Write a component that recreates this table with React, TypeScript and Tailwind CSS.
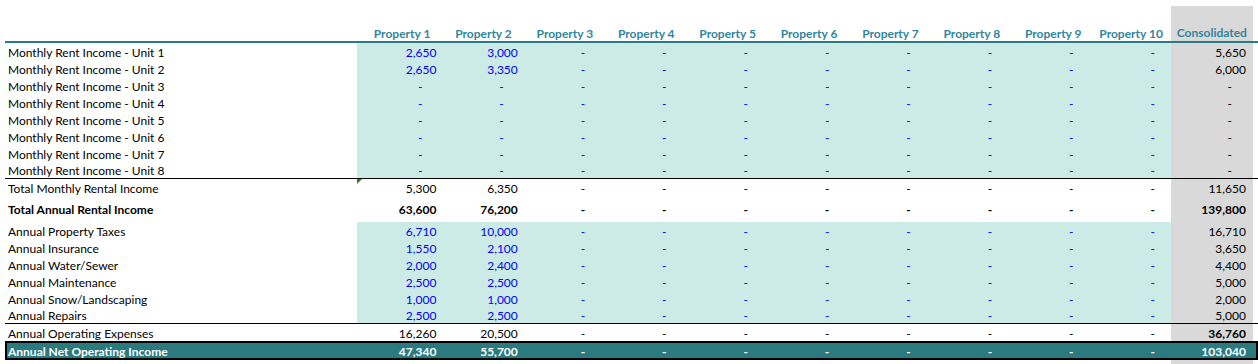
import React from 'react';

type Kind = 'input' | 'total' | 'annual' | 'opex' | 'noi';

interface RowDef {
  label: string;
  values: (number | null)[];
  cons: number | null;
  kind: Kind;
  lineBelow?: boolean;
  consBold?: boolean;
  flag?: boolean;
}

const fmt = (n: number) => n.toLocaleString('en-US');

const grid = 'grid grid-cols-[352px_repeat(10,81.4px)_82px]';

const pad = (vals: number[]) => [...vals, ...Array(10 - vals.length).fill(null)] as (number | null)[];

const rows: RowDef[] = [
  { label: 'Monthly Rent Income - Unit 1', values: pad([2650, 3000]), cons: 5650, kind: 'input' },
  { label: 'Monthly Rent Income - Unit 2', values: pad([2650, 3350]), cons: 6000, kind: 'input' },
  { label: 'Monthly Rent Income - Unit 3', values: pad([]), cons: null, kind: 'input' },
  { label: 'Monthly Rent Income - Unit 4', values: pad([]), cons: null, kind: 'input' },
  { label: 'Monthly Rent Income - Unit 5', values: pad([]), cons: null, kind: 'input' },
  { label: 'Monthly Rent Income - Unit 6', values: pad([]), cons: null, kind: 'input' },
  { label: 'Monthly Rent Income - Unit 7', values: pad([]), cons: null, kind: 'input' },
  { label: 'Monthly Rent Income - Unit 8', values: pad([]), cons: null, kind: 'input', lineBelow: true },
  { label: 'Total Monthly Rental Income', values: pad([5300, 6350]), cons: 11650, kind: 'total', flag: true },
  { label: 'Total Annual Rental Income', values: pad([63600, 76200]), cons: 139800, kind: 'annual' },
  { label: 'Annual Property Taxes', values: pad([6710, 10000]), cons: 16710, kind: 'input' },
  { label: 'Annual Insurance', values: pad([1550, 2100]), cons: 3650, kind: 'input' },
  { label: 'Annual Water/Sewer', values: pad([2000, 2400]), cons: 4400, kind: 'input' },
  { label: 'Annual Maintenance', values: pad([2500, 2500]), cons: 5000, kind: 'input' },
  { label: 'Annual Snow/Landscaping', values: pad([1000, 1000]), cons: 2000, kind: 'input' },
  { label: 'Annual Repairs', values: pad([2500, 2500]), cons: 5000, kind: 'input', lineBelow: true },
  { label: 'Annual Operating Expenses', values: pad([16260, 20500]), cons: 36760, kind: 'opex', consBold: true },
  { label: 'Annual Net Operating Income', values: pad([47340, 55700]), cons: 103040, kind: 'noi' },
];

const Value: React.FC<{ v: number | null }> = ({ v }) =>
  v === null ? <span className="mr-[14px]">-</span> : <span>{fmt(v)}</span>;

const Row: React.FC<{ row: RowDef }> = ({ row }) => {
  const { kind } = row;
  const height = kind === 'annual' ? 'h-[26px]' : kind === 'noi' ? 'h-[19px]' : 'h-[17px]';
  const rowCls =
    kind === 'noi'
      ? 'bg-[#2b7a80] text-white font-bold shadow-[inset_0_0_0_2px_#000]'
      : kind === 'annual'
      ? 'font-bold'
      : '';
  const line = row.lineBelow ? 'border-b border-black' : '';
  const propCls = kind === 'input' ? 'bg-[#cdebe6] text-[#0000ff]' : '';
  const consCls = kind === 'noi' ? '' : 'bg-[#d9d9d9]';

  return (
    <div className={`${grid} ${height} ${rowCls} ${line}`}>
      <div className="flex items-center pl-[3px] pt-[1px]">{row.label}</div>
      {row.values.map((v, i) => (
        <div key={i} className={`relative flex items-center justify-end pr-[2px] pt-[1px] ${propCls}`}>
          {row.flag && i === 0 && (
            <span className="absolute left-0 top-0 h-0 w-0 border-t-[5px] border-r-[5px] border-t-[#1e8a1e] border-r-transparent" />
          )}
          <Value v={v} />
        </div>
      ))}
      <div className={`flex items-center justify-end pr-[7px] pt-[1px] ${consCls} ${row.consBold ? 'font-bold' : ''}`}>
        <Value v={row.cons} />
      </div>
    </div>
  );
};

export default function App() {
  return (
    <div className="w-[1258px] h-[364px] bg-white pt-[6px] pl-[5px] text-[12px] leading-[15px] text-black font-['Lato',sans-serif] overflow-hidden">
      <div className={`${grid} h-[37px] border-b-2 border-[#2a7b83] font-bold text-[#31869b]`}>
        <div />
        {Array.from({ length: 10 }, (_, i) => (
          <div key={i} className="flex items-end justify-end pr-[8px]">
            Property {i + 1}
          </div>
        ))}
        <div className="flex items-end justify-end pr-[6px] pb-[1px] bg-[#d9d9d9]">Consolidated</div>
      </div>
      {rows.map(r => (
        <Row key={r.label} row={r} />
      ))}
      <div className={`${grid} h-[4px]`}>
        <div />
        {Array.from({ length: 10 }, (_, i) => (
          <div key={i} />
        ))}
        <div className="bg-[#d9d9d9]" />
      </div>
    </div>
  );
}
